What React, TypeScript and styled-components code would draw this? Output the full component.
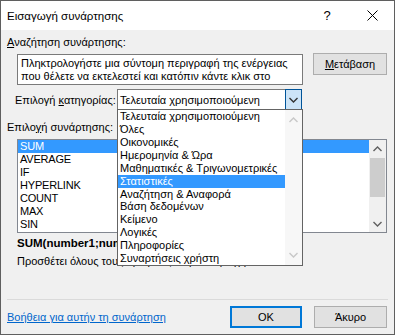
import React from "react";
import styled, { createGlobalStyle } from "styled-components";

const GlobalStyle = createGlobalStyle`
	html, body {
		margin: 0;
		padding: 0;
		background: #ffffff;
	}
	body {
		font-family: "Liberation Sans", Arial, sans-serif;
		font-size: 11px;
		color: #000000;
	}
`;

const categories = [
	"Τελευταία χρησιμοποιούμενη",
	"Όλες",
	"Οικονομικές",
	"Ημερομηνία & Ώρα",
	"Μαθηματικές & Τριγωνομετρικές",
	"Στατιστικές",
	"Αναζήτηση & Αναφορά",
	"Βάση δεδομένων",
	"Κείμενο",
	"Λογικές",
	"Πληροφορίες",
	"Συναρτήσεις χρήστη",
];

const functions = ["SUM", "AVERAGE", "IF", "HYPERLINK", "COUNT", "MAX", "SIN"];

const Chevron = ({ up, color }: { up?: boolean; color: string }) => (
	<svg width="9" height="6" viewBox="0 0 9 6">
		<path
			d={up ? "M0.5 5 L4.5 1 L8.5 5" : "M0.5 1 L4.5 5 L8.5 1"}
			fill="none"
			stroke={color}
			strokeWidth="1.4"
		/>
	</svg>
);

const App = () => {
	return (
		<>
			<GlobalStyle />
			<Window>
				<TitleBar>
					<Title>Εισαγωγή συνάρτησης</Title>
					<TitleButton $width={46}>?</TitleButton>
					<TitleButton $width={44}>
						<svg width="11" height="11" viewBox="0 0 11 11">
							<path d="M0.5 0.5 L10.5 10.5 M10.5 0.5 L0.5 10.5" stroke="#000" strokeWidth="1" />
						</svg>
					</TitleButton>
				</TitleBar>

				<Body>
					<Label>
						<u>Α</u>ναζήτηση συνάρτησης:
					</Label>

					<SearchRow>
						<SearchBox>
							Πληκτρολογήστε μια σύντομη περιγραφή της ενέργειας
							<br />
							που θέλετε να εκτελεστεί και κατόπιν κάντε κλικ στο
						</SearchBox>
						<Button>
							<u>Μ</u>ετάβαση
						</Button>
					</SearchRow>

					<CategoryRow>
						<CategoryLabel>
							Επιλογή <u>κ</u>ατηγορίας:
						</CategoryLabel>
						<Combo>
							<ComboText>Τελευταία χρησιμοποιούμενη</ComboText>
							<ComboArrow>
								<Chevron color="#333" />
							</ComboArrow>

							<DropList>
								<DropItems>
									{categories.map((name) => (
										<DropItem key={name} $selected={name === "Στατιστικές"}>
											{name}
										</DropItem>
									))}
								</DropItems>
								<DropScroll>
									<Chevron up color="#c8c8c8" />
									<Chevron color="#c8c8c8" />
								</DropScroll>
							</DropList>
						</Combo>
					</CategoryRow>

					<Label $top={10}>
						Επιλο<u>γ</u>ή συνάρτησης:
					</Label>

					<FunctionList>
						<FunctionItems>
							{functions.map((name) => (
								<FunctionItem key={name} $selected={name === "SUM"}>
									{name}
								</FunctionItem>
							))}
						</FunctionItems>
						<ListScroll>
							<ScrollArrow>
								<Chevron up color="#606060" />
							</ScrollArrow>
							<ScrollTrack>
								<ScrollThumb />
							</ScrollTrack>
							<ScrollArrow>
								<Chevron color="#606060" />
							</ScrollArrow>
						</ListScroll>
					</FunctionList>

					<Signature>SUM(number1;number2;...)</Signature>
					<Description>Προσθέτει όλους τους αριθμούς σε μια περιοχή κελιών.</Description>

					<Separator />

					<Footer>
						<HelpLink href="#">Βοήθεια για αυτήν τη συνάρτηση</HelpLink>
						<Buttons>
							<Button $primary $width={72}>
								OK
							</Button>
							<Button $width={73}>Άκυρο</Button>
						</Buttons>
					</Footer>
				</Body>
			</Window>
		</>
	);
};

const Window = styled.div`
	width: 395px;
	height: 335px;
	box-sizing: border-box;
	border: 1px solid #5f5f5f;
	background: #f0f0f0;
	display: flex;
	flex-direction: column;
	overflow: hidden;
`;

const TitleBar = styled.div`
	height: 29px;
	background: #ffffff;
	display: flex;
	align-items: center;
	padding-left: 6px;
`;

const Title = styled.div`
	flex: 1;
	font-size: 11.5px;
	padding-top: 1px;
`;

const TitleButton = styled.div<{ $width: number }>`
	width: ${(p) => p.$width}px;
	display: flex;
	justify-content: center;
	font-size: 13px;
`;

const Body = styled.div`
	flex: 1;
	display: flex;
	flex-direction: column;
	padding: 5px 6px 0 6px;
`;

const Label = styled.div<{ $top?: number }>`
	line-height: 14px;
	margin-top: ${(p) => p.$top ?? 0}px;
	white-space: nowrap;
`;

const SearchRow = styled.div`
	display: flex;
	align-items: flex-start;
	gap: 10px;
	margin-top: 4px;
	margin-left: 10px;
`;

const SearchBox = styled.div`
	width: 286px;
	height: 31px;
	margin-top: 1px;
	box-sizing: border-box;
	background: #ffffff;
	border: 1px solid #7a7a7a;
	padding: 2px 3px;
	line-height: 13px;
	white-space: nowrap;
	overflow: hidden;
`;

const Button = styled.div<{ $primary?: boolean; $width?: number }>`
	width: ${(p) => p.$width ?? 74}px;
	height: 22px;
	box-sizing: border-box;
	background: #e1e1e1;
	border: ${(p) => (p.$primary ? "2px solid #0078d7" : "1px solid #adadad")};
	display: flex;
	align-items: center;
	justify-content: center;
`;

const CategoryRow = styled.div`
	display: flex;
	align-items: center;
	margin-top: 4px;
`;

const CategoryLabel = styled.div`
	width: 110px;
	padding-left: 8px;
	box-sizing: border-box;
	white-space: nowrap;
`;

const Combo = styled.div`
	position: relative;
	width: 185px;
	height: 21px;
	box-sizing: border-box;
	background: #ffffff;
	border: 1px solid #7a7a7a;
	display: flex;
	align-items: center;
`;

const ComboText = styled.div`
	flex: 1;
	padding-left: 2px;
	white-space: nowrap;
	overflow: hidden;
`;

const ComboArrow = styled.div`
	width: 17px;
	height: 21px;
	margin: -1px -1px -1px 0;
	box-sizing: border-box;
	background: #cce4f7;
	border: 1px solid #005499;
	display: flex;
	align-items: center;
	justify-content: center;
`;

const DropList = styled.div`
	position: absolute;
	left: -1px;
	top: 19px;
	width: 186px;
	height: 157px;
	box-sizing: border-box;
	background: #ffffff;
	border: 1px solid #646464;
	display: flex;
	z-index: 5;
`;

const DropItems = styled.div`
	flex: 1;
	display: flex;
	flex-direction: column;
`;

const DropItem = styled.div<{ $selected?: boolean }>`
	height: 13px;
	line-height: 13px;
	padding-left: 2px;
	white-space: nowrap;
	overflow: hidden;
	background: ${(p) => (p.$selected ? "#3399ff" : "transparent")};
	color: ${(p) => (p.$selected ? "#ffffff" : "#000000")};
`;

const DropScroll = styled.div`
	width: 17px;
	background: #f7f7f7;
	display: flex;
	flex-direction: column;
	align-items: center;
	justify-content: space-between;
	padding: 7px 0 7px;
`;

const FunctionList = styled.div`
	margin-top: 5px;
	margin-left: 10px;
	width: 370px;
	height: 94px;
	box-sizing: border-box;
	background: #ffffff;
	border: 1px solid #828790;
	display: flex;
`;

const FunctionItems = styled.div`
	flex: 1;
`;

const FunctionItem = styled.div<{ $selected?: boolean }>`
	height: 13px;
	line-height: 13px;
	padding-left: 2px;
	letter-spacing: -0.2px;
	background: ${(p) => (p.$selected ? "#3399ff" : "transparent")};
	color: ${(p) => (p.$selected ? "#ffffff" : "#000000")};
`;

const ListScroll = styled.div`
	width: 17px;
	background: #f0f0f0;
	display: flex;
	flex-direction: column;
`;

const ScrollArrow = styled.div`
	height: 17px;
	display: flex;
	align-items: center;
	justify-content: center;
`;

const ScrollTrack = styled.div`
	flex: 1;
	padding: 1px 1px;
`;

const ScrollThumb = styled.div`
	height: 39px;
	background: #cdcdcd;
`;

const Signature = styled.div`
	margin-top: 3px;
	margin-left: 10px;
	font-weight: bold;
	font-size: 11.5px;
	line-height: 14px;
	white-space: nowrap;
`;

const Description = styled.div`
	margin-top: 4px;
	margin-left: 10px;
	line-height: 14px;
	white-space: nowrap;
`;

const Separator = styled.div`
	margin-top: 31px;
	height: 1px;
	background: #dadada;
`;

const Footer = styled.div`
	display: flex;
	align-items: center;
	justify-content: space-between;
	margin-top: 6px;
	padding-right: 1px;
`;

const HelpLink = styled.a`
	color: #0066cc;
	text-decoration: underline;
	white-space: nowrap;
`;

const Buttons = styled.div`
	display: flex;
	gap: 12px;
`;

export default App;
